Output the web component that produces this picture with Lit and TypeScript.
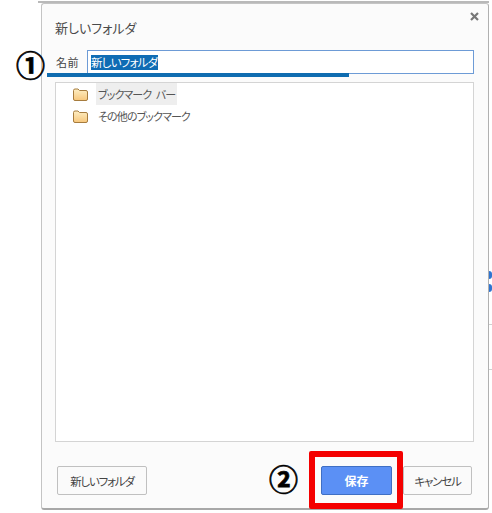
import { LitElement, html, css } from "lit";
import { customElement } from "lit/decorators.js";

const folder = html`<svg class="folder" viewBox="0 0 16 13" width="16" height="13">
  <defs><linearGradient id="fg" x1="0" y1="0" x2="0" y2="1"><stop offset="0" stop-color="#fdeec4"/><stop offset="1" stop-color="#f7c77c"/></linearGradient></defs>
  <path d="M1.5 2.5 Q1.5 1 3 1 H6 L7.5 2.5 H14 Q15.5 2.5 15.5 4 V11 Q15.5 12.5 14 12.5 H3 Q1.5 12.5 1.5 11 Z" fill="url(#fg)" stroke="#a67c3e" stroke-width="1"/>
</svg>`;

@customElement("app-root")
export class AppRoot extends LitElement {
  static styles = css`
    :host {
      display: block;
      position: relative;
      width: 492px;
      height: 513px;
      overflow: hidden;
      background: #fff;
      font-family: "Noto Sans CJK JP", "Liberation Sans", sans-serif;
      font-feature-settings: "palt";
      color: #444;
    }
    .topline { position: absolute; left: 38px; top: 1px; width: 451px; height: 2px; background: #b9b9b9; }
    .dialog {
      box-sizing: border-box;
      width: 448px;
      height: 507px;
      margin: 3px 0 0 41px;
      background: #fbfbfb;
      border: 1px solid #c4c4c4;
      border-right-color: #b0b0b0;
      border-bottom: 2px solid #a8a8a8;
      border-radius: 3px;
      padding: 0 14px 0 13px;
      display: flex;
      flex-direction: column;
      position: relative;
    }
    .title { font-size: 13px; line-height: 18px; margin-top: 15px; color: #4a4a4a; }
    .close { position: absolute; right: 9px; top: 8px; width: 9px; height: 9px; }
    .name-row { display: flex; align-items: center; margin-top: 13px; height: 24px; }
    .name-label { width: 31px; padding-left: 1px; font-size: 11px; color: #444; letter-spacing: 0.5px; }
    .input {
      box-sizing: border-box;
      flex: 1;
      height: 24px;
      border: 1px solid #6d9bd6;
      background: #fff;
      display: flex;
      align-items: center;
      padding-left: 3px;
      font-size: 11.5px;
      letter-spacing: -0.8px;
    }
    .sel { background: #0f6cb4; color: #fff; line-height: 15px; padding-right: 1px; }
    .tree {
      box-sizing: border-box;
      height: 360px;
      margin-top: 8px;
      border: 1px solid #d4d4d4;
      background: #fff;
      padding: 0 0 0 16px;
      display: flex;
      flex-direction: column;
    }
    .node { display: flex; align-items: center; height: 22px; font-size: 11px; gap: 8px; color: #555; letter-spacing: -0.9px; word-spacing: 3px; }
    .node span { padding: 0 2px; line-height: 22px; }
    .node.on span { background: #eeeeee; }
    .folder { flex: none; }
    .footer { display: flex; align-items: center; margin-top: 24px; padding-left: 2px; }
    button {
      box-sizing: border-box;
      height: 29px;
      font-family: inherit;
      font-feature-settings: inherit;
      font-size: 11.5px;
      letter-spacing: -1.2px;
      border: 1px solid #c0c0c0;
      border-radius: 2px;
      background: #fafafa;
      color: #444;
      padding: 0;
    }
    .new { width: 90px; }
    .spacer { flex: 1; }
    .save { width: 71px; background: #5b90f5; border-color: #3f6fc4; color: #fff; font-weight: 700; font-size: 12px; letter-spacing: 0; }
    .cancel { width: 69px; margin: 0 2px 0 11px; }
    .mark { position: absolute; font-size: 29px; line-height: 30px; font-weight: 700; color: #000; -webkit-text-stroke: 0.7px #000; }
    .m1 { left: 16px; top: 49px; }
    .m2 { left: 269px; top: 463px; }
    .under { position: absolute; left: 47px; top: 73px; width: 302px; height: 4px; background: #0f6cb0; }
    .red { position: absolute; left: 309px; top: 451px; width: 94px; height: 58px; box-sizing: border-box; border: 6px solid #f40000; border-radius: 2px; }
    .peek { position: absolute; left: 489px; width: 3px; }
    .dot { background: #2f74d0; height: 8px; border-radius: 0 4px 4px 0; }
    .gray { background: #d0d0d0; height: 1px; }
  `;

  render() {
    return html`
      <div class="topline"></div>
      <div class="dialog">
        <div class="title">新しいフォルダ</div>
        <svg class="close" viewBox="0 0 9 9"><path d="M1 1 L8 8 M8 1 L1 8" stroke="#777" stroke-width="2.2" fill="none"/></svg>
        <div class="name-row">
          <div class="name-label">名前</div>
          <div class="input"><span class="sel">新しいフォルダ</span></div>
        </div>
        <div class="tree">
          <div class="node on">${folder}<span>ブックマーク バー</span></div>
          <div class="node">${folder}<span>その他のブックマーク</span></div>
        </div>
        <div class="footer">
          <button class="new">新しいフォルダ</button>
          <div class="spacer"></div>
          <button class="save">保存</button>
          <button class="cancel">キャンセル</button>
        </div>
      </div>
      <div class="peek dot" style="top:271px"></div>
      <div class="peek dot" style="top:284px"></div>
      <div class="peek gray" style="top:324px"></div>
      <div class="peek gray" style="top:369px"></div>
      <div class="under"></div>
      <div class="red"></div>
      <div class="mark m1">①</div>
      <div class="mark m2">②</div>
    `;
  }
}
